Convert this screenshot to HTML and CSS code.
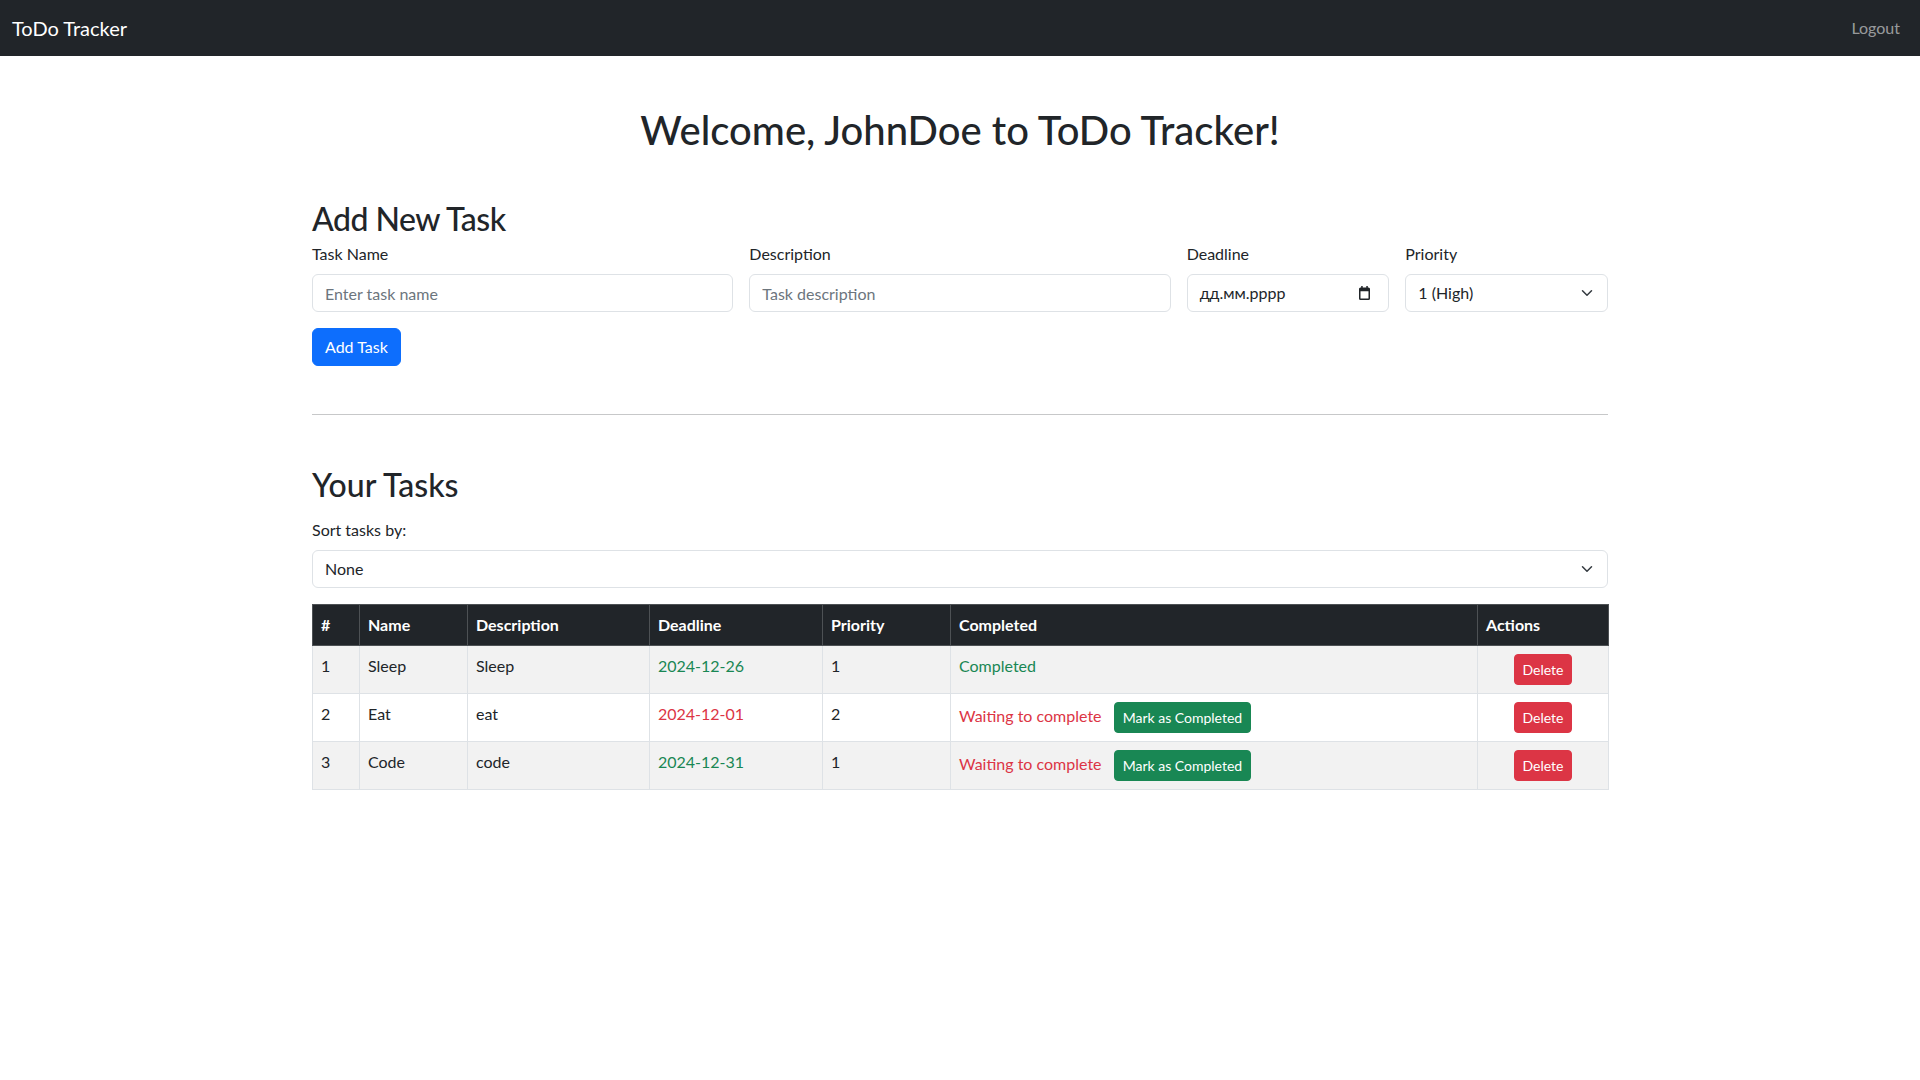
FILE: index.html
```html
<!DOCTYPE html>
<html lang="en">
<head>
<meta charset="utf-8">
<title>ToDo Tracker</title>
<link rel="stylesheet" href="styles.css">
</head>
<body>
<nav class="navbar">
  <a class="brand" href="#">ToDo Tracker</a>
  <a class="nav-link" href="#">Logout</a>
</nav>

<main class="container">
  <h1 class="welcome">Welcome, JohnDoe to ToDo Tracker!</h1>

  <section class="add-task">
    <h2 class="section-title add-title">Add New Task</h2>
    <form class="task-form">
      <div class="field">
        <label class="form-label" for="tname">Task Name</label>
        <input class="form-control" id="tname" type="text" placeholder="Enter task name">
      </div>
      <div class="field">
        <label class="form-label" for="tdesc">Description</label>
        <input class="form-control" id="tdesc" type="text" placeholder="Task description">
      </div>
      <div class="field">
        <label class="form-label">Deadline</label>
        <div class="form-control date-control">
          <span>дд.мм.рррр</span>
          <svg class="cal-icon" width="11" height="14" viewBox="0 0 11 14" aria-hidden="true">
            <rect x="0.75" y="2.25" width="9.5" height="11" rx="0.8" fill="none" stroke="#212529" stroke-width="1.5"/>
            <rect x="0.75" y="2.25" width="9.5" height="3" fill="#212529"/>
            <rect x="2.2" y="0" width="1.5" height="3" fill="#212529"/>
            <rect x="7.3" y="0" width="1.5" height="3" fill="#212529"/>
          </svg>
        </div>
      </div>
      <div class="field">
        <label class="form-label" for="tprio">Priority</label>
        <div class="form-control select-control">
          <select id="tprio" class="bare-select">
            <option>1 (High)</option>
            <option>2 (Medium)</option>
            <option>3 (Low)</option>
          </select>
          <svg class="chevron" width="12" height="12" viewBox="0 0 16 16" aria-hidden="true">
            <path d="M2 5l6 6 6-6" fill="none" stroke="#343a40" stroke-width="2" stroke-linecap="round" stroke-linejoin="round"/>
          </svg>
        </div>
      </div>
    </form>
    <button class="btn btn-primary add-btn" type="button">Add Task</button>
  </section>

  <hr class="divider">

  <section class="tasks">
    <h2 class="section-title tasks-title">Your Tasks</h2>
    <label class="form-label" for="sort">Sort tasks by:</label>
    <div class="form-control select-control sort-select">
      <select id="sort" class="bare-select">
        <option>None</option>
        <option>Deadline</option>
        <option>Priority</option>
      </select>
      <svg class="chevron" width="12" height="12" viewBox="0 0 16 16" aria-hidden="true">
        <path d="M2 5l6 6 6-6" fill="none" stroke="#343a40" stroke-width="2" stroke-linecap="round" stroke-linejoin="round"/>
      </svg>
    </div>

    <table class="table">
      <colgroup>
        <col class="c-num"><col class="c-name"><col class="c-desc"><col class="c-dead"><col class="c-prio"><col class="c-comp"><col class="c-act">
      </colgroup>
      <thead>
        <tr>
          <th>#</th><th>Name</th><th>Description</th><th>Deadline</th><th>Priority</th><th>Completed</th><th>Actions</th>
        </tr>
      </thead>
      <tbody>
        <tr class="striped">
          <td>1</td><td>Sleep</td><td>Sleep</td>
          <td class="text-success">2024-12-26</td>
          <td>1</td>
          <td><span class="text-success">Completed</span></td>
          <td class="center"><button class="btn btn-sm btn-danger" type="button">Delete</button></td>
        </tr>
        <tr>
          <td>2</td><td>Eat</td><td>eat</td>
          <td class="text-danger">2024-12-01</td>
          <td>2</td>
          <td><span class="text-danger">Waiting to complete</span> <button class="btn btn-sm btn-success mark-btn" type="button">Mark as Completed</button></td>
          <td class="center"><button class="btn btn-sm btn-danger" type="button">Delete</button></td>
        </tr>
        <tr class="striped">
          <td>3</td><td>Code</td><td>code</td>
          <td class="text-success">2024-12-31</td>
          <td>1</td>
          <td><span class="text-danger">Waiting to complete</span> <button class="btn btn-sm btn-success mark-btn" type="button">Mark as Completed</button></td>
          <td class="center"><button class="btn btn-sm btn-danger" type="button">Delete</button></td>
        </tr>
      </tbody>
    </table>
  </section>
</main>
</body>
</html>
```

FILE: styles.css
```css
* { box-sizing: border-box; }

body {
  margin: 0;
  font-family: Lato, "Liberation Sans", sans-serif;
  font-size: 16px;
  line-height: 1.5;
  color: #212529;
  background: #fff;
}

.navbar {
  background: #212529;
  height: 56px;
  display: flex;
  align-items: center;
  justify-content: space-between;
  padding: 0 12px;
}
.brand {
  color: #fff;
  font-size: 20px;
  text-decoration: none;
  line-height: 30px;
}
.nav-link {
  color: rgba(255,255,255,.55);
  text-decoration: none;
  padding: 8px;
}

.container {
  width: 1320px;
  margin: 0 auto;
  padding: 0 12px;
}

.welcome {
  margin: 50px 0 46px;
  font-size: 40px;
  font-weight: 500;
  line-height: 1.2;
  text-align: center;
}

.section-title {
  margin: 0 0 8px;
  font-size: 32px;
  font-weight: 500;
  line-height: 1.2;
}
.add-title { margin-bottom: 4px; letter-spacing: -0.5px; }
.tasks-title { margin-bottom: 13px; }

.task-form {
  display: grid;
  grid-template-columns: calc((100% + 16px) / 3 - 16px) calc((100% + 16px) / 3 - 16px) 1fr 1fr;
  column-gap: 16px;
}
.field { display: flex; flex-direction: column; }

.form-label {
  display: block;
  margin-bottom: 8px;
}

.form-control {
  display: block;
  width: 100%;
  height: 38px;
  padding: 6px 12px;
  font: inherit;
  color: #212529;
  background: #fff;
  border: 1px solid #dee2e6;
  border-radius: 6px;
}
.form-control::placeholder { color: #6c757d; opacity: 1; }

.date-control, .select-control {
  display: flex;
  align-items: center;
  justify-content: space-between;
}
.date-control { padding-right: 18px; }
.select-control { padding-right: 14px; }
.bare-select {
  flex: 1;
  appearance: none;
  -webkit-appearance: none;
  border: 0;
  background: transparent;
  font: inherit;
  color: #212529;
  padding: 0;
  outline: none;
}
.chevron { flex: none; }
.cal-icon { flex: none; }

.sort-select { margin-bottom: 16px; }

.btn {
  display: inline-block;
  font: inherit;
  line-height: 1.5;
  padding: 6px 12px;
  border: 1px solid transparent;
  border-radius: 6px;
  color: #fff;
  cursor: pointer;
  vertical-align: middle;
}
.btn-primary { background: #0d6efd; border-color: #0d6efd; }
.btn-success { background: #198754; border-color: #198754; }
.btn-danger { background: #dc3545; border-color: #dc3545; }
.btn-sm {
  padding: 4px 8px;
  font-size: 14px;
  border-radius: 4px;
}
.add-btn { margin-top: 16px; }
.mark-btn { margin-left: 8px; }

.divider {
  margin: 48px 0 51px;
  border: 0;
  border-top: 1px solid #212529;
  opacity: .25;
}

.table {
  width: 100%;
  border-collapse: collapse;
  table-layout: fixed;
  vertical-align: top;
}
.c-num { width: 47px; }
.c-name { width: 108px; }
.c-desc { width: 182px; }
.c-dead { width: 173px; }
.c-prio { width: 128px; }
.c-comp { width: 527px; }
.c-act { width: 131px; }

.table th, .table td {
  padding: 8px;
  border: 1px solid #dee2e6;
  text-align: left;
  vertical-align: top;
}
.table thead th {
  background: #212529;
  color: #fff;
  font-weight: 700;
  border-color: #4d5154;
}
.table tbody tr.striped td { background: #f2f2f2; }
.table td.center { text-align: center; }

.text-success { color: #198754; }
.text-danger { color: #dc3545; }
```
